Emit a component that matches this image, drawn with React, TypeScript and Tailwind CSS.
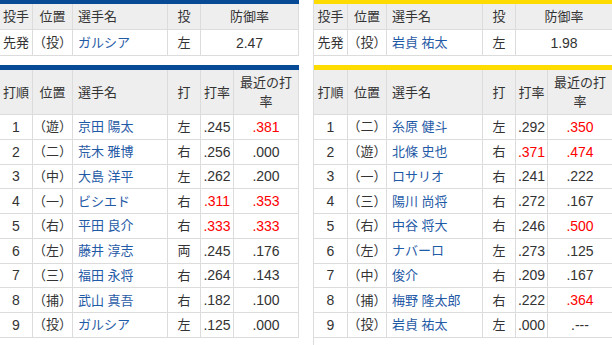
import React from "react";

type Row = [string, string, string, string, string, string, boolean?, boolean?];

const left: Row[] = [
  ["1", "（遊）", "京田 陽太", "左", ".245", ".381", false, true],
  ["2", "（二）", "荒木 雅博", "右", ".256", ".000"],
  ["3", "（中）", "大島 洋平", "左", ".262", ".200"],
  ["4", "（一）", "ビシエド", "右", ".311", ".353", true, true],
  ["5", "（右）", "平田 良介", "右", ".333", ".333", true, true],
  ["6", "（左）", "藤井 淳志", "両", ".245", ".176"],
  ["7", "（三）", "福田 永将", "右", ".264", ".143"],
  ["8", "（捕）", "武山 真吾", "右", ".182", ".100"],
  ["9", "（投）", "ガルシア", "左", ".125", ".000"],
];

const right: Row[] = [
  ["1", "（二）", "糸原 健斗", "左", ".292", ".350", false, true],
  ["2", "（遊）", "北條 史也", "右", ".371", ".474", true, true],
  ["3", "（一）", "ロサリオ", "右", ".241", ".222"],
  ["4", "（三）", "陽川 尚将", "右", ".272", ".167"],
  ["5", "（右）", "中谷 将大", "右", ".246", ".500", false, true],
  ["6", "（左）", "ナバーロ", "左", ".273", ".125"],
  ["7", "（中）", "俊介", "右", ".209", ".167"],
  ["8", "（捕）", "梅野 隆太郎", "右", ".222", ".364", false, true],
  ["9", "（投）", "岩貞 祐太", "左", ".000", ".---"],
];

const FONT = "[font-family:'Liberation_Sans','Noto_Sans_CJK_JP',sans-serif]";

function Panel({
  side,
  pitcher,
  hand,
  era,
  rows,
}: {
  side: "L" | "R";
  pitcher: string;
  hand: string;
  era: string;
  rows: Row[];
}) {
  const isL = side === "L";
  const w = isL
    ? ["w-[33px]", "w-[40px]", "w-[95px]", "w-[33px]", "w-[33px]", "w-[65px]"]
    : ["w-[34px]", "w-[39px]", "w-[96px]", "w-[33px]", "w-[32px]", "w-[65px]"];
  const topLast = isL ? "w-[98px]" : "w-[97px]";
  const bar = isL ? "bg-[#074a96]" : "bg-[#ffdc00]";
  const panelCls = isL ? "w-[299px]" : "w-[300px] border-l border-[#dcdcdc]";
  const cell = "flex items-center border-r border-[#dcdcdc] shrink-0";
  const num = "text-[14px] [font-family:'Liberation_Sans',sans-serif]";
  return (
    <div className={`${panelCls} shrink-0 flex flex-col`}>
      {/* pitcher table */}
      <div className={`h-[4px] ${bar}`} />
      <div className="flex h-[26px] bg-[#eeeeee] border-b border-[#dcdcdc]">
        <div className={`${cell} ${w[0]} justify-center`}>投手</div>
        <div className={`${cell} ${w[1]} justify-center`}>位置</div>
        <div className={`${cell} ${w[2]} pl-[5px]`}>選手名</div>
        <div className={`${cell} ${w[3]} justify-center`}>投</div>
        <div className={`${cell} ${topLast} justify-center`}>防御率</div>
      </div>
      <div className="flex h-[26px] bg-white border-b border-[#dcdcdc]">
        <div className={`${cell} ${w[0]} justify-center`}>先発</div>
        <div className={`${cell} ${w[1]} justify-center`}>（投）</div>
        <div className={`${cell} ${w[2]} pl-[5px] text-[#1f5aa6]`}>{pitcher}</div>
        <div className={`${cell} ${w[3]} justify-center`}>{hand}</div>
        <div className={`${cell} ${topLast} justify-center ${num}`}>{era}</div>
      </div>
      <div className="h-[9px]" />
      {/* lineup table */}
      <div className={`h-[5px] ${bar}`} />
      <div className="flex h-[45px] bg-[#eeeeee] border-b border-[#dcdcdc]">
        <div className={`${cell} ${w[0]} justify-center`}>打順</div>
        <div className={`${cell} ${w[1]} justify-center`}>位置</div>
        <div className={`${cell} ${w[2]} pl-[5px]`}>選手名</div>
        <div className={`${cell} ${w[3]} justify-center`}>打</div>
        <div className={`${cell} ${w[4]} justify-center`}>打率</div>
        <div className={`${cell} ${w[5]} justify-center text-center leading-[19px]`}>
          最近の打
          <br />
          率
        </div>
      </div>
      {rows.map((r) => (
        <div key={r[0]} className="flex h-[24.75px] bg-white border-b border-[#dcdcdc]">
          <div className={`${cell} ${w[0]} justify-center ${num}`}>{r[0]}</div>
          <div className={`${cell} ${w[1]} justify-center`}>{r[1]}</div>
          <div className={`${cell} ${w[2]} pl-[5px] text-[#1f5aa6]`}>{r[2]}</div>
          <div className={`${cell} ${w[3]} justify-center`}>{r[3]}</div>
          <div className={`${cell} ${w[4]} justify-center ${num} ${r[6] ? "text-[#ff0000]" : ""}`}>{r[4]}</div>
          <div className={`${cell} ${w[5]} justify-center ${num} ${r[7] ? "text-[#ff0000]" : ""}`}>{r[5]}</div>
        </div>
      ))}
    </div>
  );
}

export default function App() {
  return (
    <div
      className={`w-[612px] h-[345px] overflow-hidden bg-white text-[#333333] text-[13px] leading-none ${FONT} flex gap-[14px]`}
    >
      <Panel side="L" pitcher="ガルシア" hand="左" era="2.47" rows={left} />
      <Panel side="R" pitcher="岩貞 祐太" hand="左" era="1.98" rows={right} />
    </div>
  );
}
